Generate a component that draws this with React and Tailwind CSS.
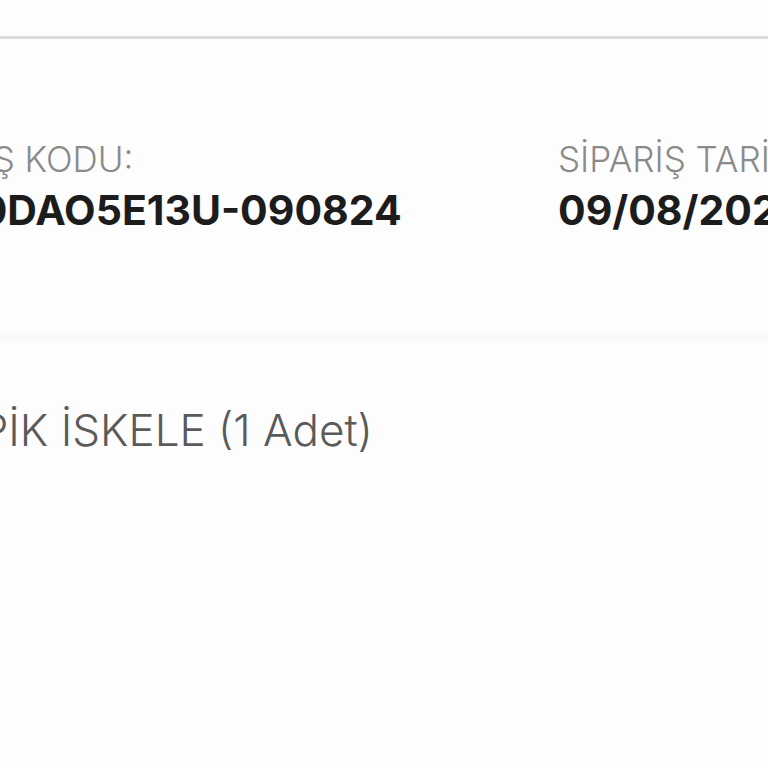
export default function App() {
  return (
    <div
      className="w-[768px] h-[768px] overflow-hidden bg-[#fdfdfd]"
      style={{ fontFamily: "Inter, 'Noto Sans', sans-serif" }}
    >
      <div className="h-[36px]" />
      <div className="h-[3px] bg-[#dcdcdc]" />

      <div className="-ml-[113px] flex pt-[100px] pb-[98px]">
        <div className="w-[671px] shrink-0 flex flex-col gap-[6px]">
          <span className="text-[35px] leading-[40px] text-[#8a8a8a] font-light whitespace-nowrap">
            SİPARİŞ KODU:
          </span>
          <span className="text-[41px] leading-[50px] text-[#1c1c1c] font-bold whitespace-nowrap">
            MEV0DAO5E13U-090824
          </span>
        </div>
        <div className="shrink-0 flex flex-col gap-[6px]">
          <span className="text-[35px] leading-[40px] text-[#8a8a8a] font-light whitespace-nowrap">
            SİPARİŞ TARİHİ:
          </span>
          <span className="text-[41px] leading-[50px] text-[#1c1c1c] font-bold whitespace-nowrap">
            09/08/2024
          </span>
        </div>
      </div>

      <div className="h-[7px] bg-[#f8f8f8]" />

      <div className="-ml-[228px] pt-[64px]">
        <span className="text-[44px] leading-[52px] text-[#5a5a5a] font-light whitespace-nowrap">
          GEÇME TİPİK İSKELE (1 Adet)
        </span>
      </div>
    </div>
  );
}
